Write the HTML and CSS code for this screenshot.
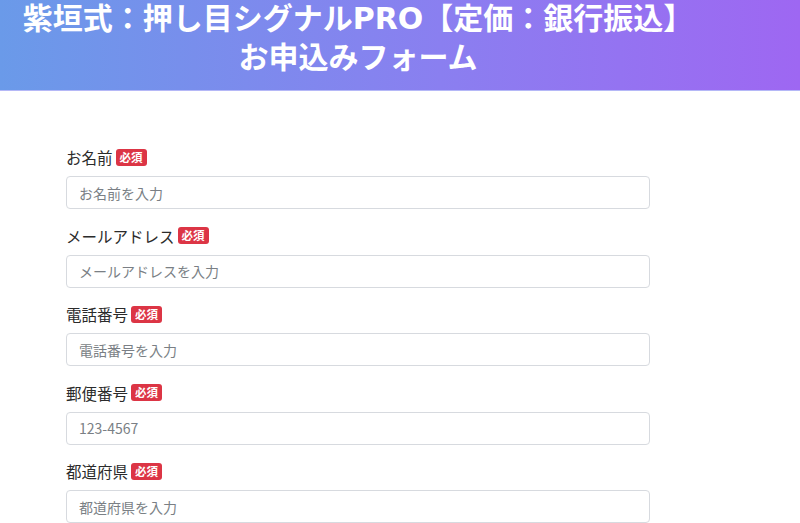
FILE: index.html
```html
<!DOCTYPE html>
<html lang="ja">
<head>
<meta charset="utf-8">
<title>お申込みフォーム</title>
<link rel="stylesheet" href="styles.css">
</head>
<body>
<header class="hero">
  <h1 class="hero-title">紫垣式：押し目シグナルPRO【定価：銀行振込】<br>お申込みフォーム</h1>
</header>
<main class="form-wrap">
  <form class="form">
    <div class="field">
      <label class="label">お名前<span class="badge">必須</span></label>
      <input class="input" type="text" placeholder="お名前を入力">
    </div>
    <div class="field">
      <label class="label">メールアドレス<span class="badge">必須</span></label>
      <input class="input" type="text" placeholder="メールアドレスを入力">
    </div>
    <div class="field">
      <label class="label">電話番号<span class="badge">必須</span></label>
      <input class="input" type="text" placeholder="電話番号を入力">
    </div>
    <div class="field">
      <label class="label">郵便番号<span class="badge">必須</span></label>
      <input class="input" type="text" placeholder="123-4567">
    </div>
    <div class="field">
      <label class="label">都道府県<span class="badge">必須</span></label>
      <input class="input" type="text" placeholder="都道府県を入力">
    </div>
  </form>
</main>
</body>
</html>
```
FILE: styles.css
```css
* { box-sizing: border-box; }
html, body { margin: 0; padding: 0; background: #fff; }
body {
  font-family: "Noto Sans CJK JP", "Noto Sans", sans-serif;
  color: #333;
  overflow: hidden;
}
.hero {
  background: linear-gradient(90deg, #6a9ae9 0%, #8a7ff0 55%, #9e67f2 100%);
  border-bottom: 1px solid #b5b8f7;
  padding: 0 0 13px;
}
.hero-title {
  width: 716px;
  margin: -1px 0 0;
  text-align: center;
  color: #fff;
  font-family: "DejaVu Sans", "Noto Sans CJK JP", sans-serif;
  font-size: 30px;
  font-weight: 700;
  line-height: 39px;
}
.form-wrap {
  padding: 54px 0 0 66px;
}
.form {
  width: 584px;
}
.field {
  margin-bottom: 14.5px;
}
.label {
  display: flex;
  align-items: center;
  height: 24px;
  font-size: 15.5px;
  line-height: 24px;
  color: #2b2b2b;
  margin-bottom: 7px;
}
.badge {
  display: inline-block;
  margin-left: 3px;
  background: #dc3545;
  color: #fff;
  font-size: 11.5px;
  font-weight: 700;
  line-height: 17px;
  padding: 0 4px;
  border-radius: 3px;
}
.input {
  display: block;
  width: 100%;
  height: 33px;
  border: 1px solid #d7dadf;
  border-radius: 4px;
  padding: 0 12px;
  font-family: "Noto Sans CJK JP", "Noto Sans", sans-serif;
  font-size: 14px;
  color: #333;
  background: #fff;
}
.input::placeholder { color: #7a7f85; }
```
